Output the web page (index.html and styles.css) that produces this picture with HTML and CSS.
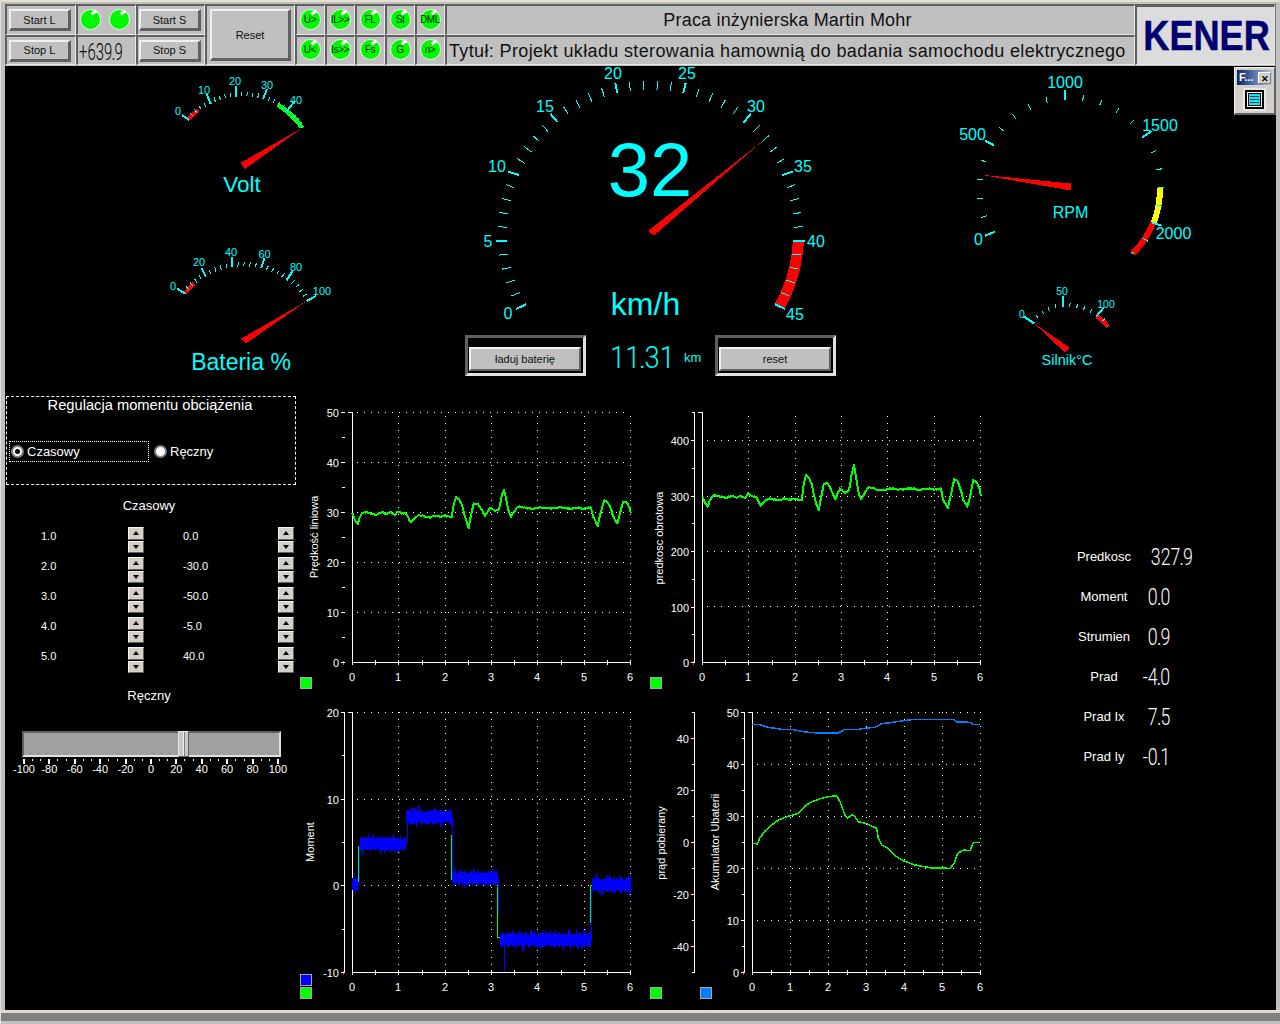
FILE: index.html
```html
<!DOCTYPE html>
<html lang="pl">
<head>
<meta charset="utf-8">
<title>Praca inżynierska Martin Mohr</title>
<link rel="stylesheet" href="styles.css">
</head>
<body>
<div class="window">
  <header class="toolbar">
    <div class="cell"><button class="btn">Start L</button></div>
    <div class="cell cell-leds"><span class="led"></span><span class="led"></span></div>
    <div class="cell"><button class="btn">Start S</button></div>
    <div class="cell cell-reset"><button class="btn btn-reset">Reset</button></div>
    <div class="cell"><span class="led">U&gt;</span></div>
    <div class="cell"><span class="led">IL&gt;&gt;</span></div>
    <div class="cell"><span class="led">FL</span></div>
    <div class="cell"><span class="led">St</span></div>
    <div class="cell"><span class="led">DML</span></div>
    <div class="cell cell-title">Praca inżynierska Martin Mohr</div>
    <div class="cell cell-logo"><span class="logo">KENER</span></div>
    <div class="cell"><button class="btn">Stop L</button></div>
    <div class="cell cell-num"><span class="seg seg-dark">+639<span class="dot">.</span>9</span></div>
    <div class="cell"><button class="btn">Stop S</button></div>
    <div class="cell"><span class="led">U&lt;</span></div>
    <div class="cell"><span class="led">Is&gt;&gt;</span></div>
    <div class="cell"><span class="led">Fs</span></div>
    <div class="cell"><span class="led">G</span></div>
    <div class="cell"><span class="led">n&gt;</span></div>
    <div class="cell cell-subtitle">Tytuł: Projekt układu sterowania hamownią do badania samochodu elektrycznego</div>
  </header>

  <main class="panel">
    <svg class="canvas" id="canvas" width="1270" height="944" viewBox="5 66 1270 944" aria-label="Instrumenty"></svg>

    <aside class="controls">
      <section class="mode-box">
        <h2 class="mode-title">Regulacja momentu obciążenia</h2>
        <div class="mode-row">
          <label class="radio radio-focus"><span class="radio-dot radio-on"></span>Czasowy</label>
          <label class="radio"><span class="radio-dot"></span>Ręczny</label>
        </div>
      </section>
      <h3 class="heading heading-time">Czasowy</h3>
      <div class="timing">
        <span>1.0</span><span class="spin"><i class="up"></i><i class="down"></i></span><span class="t-val">0.0</span><span class="spin"><i class="up"></i><i class="down"></i></span>
        <span>2.0</span><span class="spin"><i class="up"></i><i class="down"></i></span><span class="t-val">-30.0</span><span class="spin"><i class="up"></i><i class="down"></i></span>
        <span>3.0</span><span class="spin"><i class="up"></i><i class="down"></i></span><span class="t-val">-50.0</span><span class="spin"><i class="up"></i><i class="down"></i></span>
        <span>4.0</span><span class="spin"><i class="up"></i><i class="down"></i></span><span class="t-val">-5.0</span><span class="spin"><i class="up"></i><i class="down"></i></span>
        <span>5.0</span><span class="spin"><i class="up"></i><i class="down"></i></span><span class="t-val">40.0</span><span class="spin"><i class="up"></i><i class="down"></i></span>
      </div>
      <h3 class="heading heading-manual">Ręczny</h3>
      <div class="slider"><span class="thumb"></span></div>
      <div class="scale">
        <span>-100</span><span>-80</span><span>-60</span><span>-40</span><span>-20</span><span>0</span><span>20</span><span>40</span><span>60</span><span>80</span><span>100</span>
      </div>
    </aside>

    <section class="center">
      <div class="frame"><button class="btn btn-frame">ładuj baterię</button></div>
      <div class="odo">
        <span class="seg seg-cyan">11<span class="dot">.</span>31</span>
        <span class="km">km</span>
      </div>
      <div class="frame"><button class="btn btn-frame">reset</button></div>
    </section>

    <section class="readouts">
      <span class="r-label">Predkosc</span><span class="seg r-val r-wide">327<span class="dot">.</span>9</span>
      <span class="r-label">Moment</span><span class="seg r-val">0<span class="dot">.</span>0</span>
      <span class="r-label">Strumien</span><span class="seg r-val">0<span class="dot">.</span>9</span>
      <span class="r-label">Prad</span><span class="seg r-val">-4<span class="dot">.</span>0</span>
      <span class="r-label">Prad Ix</span><span class="seg r-val">7<span class="dot">.</span>5</span>
      <span class="r-label">Prad Iy</span><span class="seg r-val">-0<span class="dot">.</span>1</span>
    </section>

    <div class="palette">
      <div class="palette-title"><span>F...</span><b class="palette-x">✕</b></div>
      <div class="palette-tool">
        <svg width="23" height="23" viewBox="0 0 23 23" class="palette-icon">
          <rect x="0" y="0" width="23" height="23" fill="#e8e8e8"/>
          <rect x="2" y="2" width="19" height="19" fill="#000"/>
          <rect x="4" y="4" width="15" height="15" fill="#fff"/>
          <rect x="5" y="5" width="13" height="13" fill="#000"/>
          <rect x="6" y="6" width="11" height="11" fill="#22e0f0"/>
          <path d="M7 8.5h9M7 11.5h9M7 14.5h9" stroke="#004060" stroke-width="1"/>
        </svg>
      </div>
    </div>
  </main>
  <footer class="statusbar"></footer>
</div>
<script src="app.js"></script>
</body>
</html>
```
FILE: styles.css
```css
* { box-sizing: border-box; }
html, body { margin: 0; padding: 0; background: #c0c0c0; }
body { font-family: "Liberation Sans", Arial, sans-serif; }

.window {
  width: 1280px;
  height: 1024px;
  background: #c0c0c0;
  border-top: 2px solid #e4e0d4;
  border-left: 1px solid #e4e0d4;
  padding: 2px 4px 0 4px;
  display: flex;
  flex-direction: column;
  overflow: hidden;
}

/* ---------- toolbar ---------- */
.toolbar {
  display: grid;
  grid-template-columns: 71px 60px 69px 90px repeat(5, 30px) 690px 140px;
  grid-template-rows: 31px 30px;
  height: 61px;
  flex: none;
  background: #6e6e6e;
}
.cell {
  background: #c0c0c0;
  border-top: 2px solid #606060;
  border-left: 2px solid #606060;
  border-right: 1px solid #e8e8e8;
  border-bottom: 1px solid #e8e8e8;
  display: flex;
  align-items: center;
  justify-content: center;
}
.cell-leds { gap: 9px; padding-right: 3px; }
.cell-reset { grid-row: span 2; padding-left: 2px; }
.cell-title { color: #111; font-size: 18px; letter-spacing: 0.01em; padding-right: 6px; }
.cell-subtitle { color: #111; font-size: 18px; justify-content: flex-start; padding: 2px 0 0 2px; white-space: nowrap; letter-spacing: 0.36px; }
.cell-logo { background: #dcdcdc; grid-column: 11; grid-row: 1 / 3; border-top-width: 3px; overflow: hidden; padding-left: 2px; }
.cell-num { justify-content: flex-start; padding-left: 1px; }

.btn {
  font-family: "Liberation Sans", Arial, sans-serif;
  font-size: 11px;
  color: #111;
  background: #c0c0c0;
  width: 62px;
  height: 22px;
  margin-left: -2px;
  padding: 0;
  border-style: solid;
  border-width: 2px 3px 3px 2px;
  border-color: #f0f0f0 #606060 #606060 #f0f0f0;
  border-radius: 0;
}
.btn-reset { width: 81px; height: 52px; }
.btn-frame { width: 112px; height: 24px; margin-left: 0; border-width: 2px; font-size: 11px; }

.logo {
  font-family: "Liberation Sans", sans-serif;
  font-weight: 700;
  font-size: 42px;
  line-height: 1;
  color: #000070;
  -webkit-text-stroke: 0.5px #000070;
  transform: scaleX(0.86);
  display: inline-block;
  margin-top: 1px;
}

.led {
  width: 21px;
  height: 21px;
  margin: -2px 0 0 -1px;
  border-radius: 50%;
  background: #00f800;
  border: 1px solid #e4ffe4;
  position: relative;
  color: #0a2a0a;
  font-size: 10px;
  letter-spacing: -0.4px;
  display: flex;
  align-items: center;
  justify-content: center;
  white-space: nowrap;
}
.led::before {
  content: "";
  position: absolute;
  top: 1px;
  left: 10px;
  width: 6px;
  height: 3px;
  background: #fff;
  transform: rotate(-35deg);
}

/* ---------- seven segment readouts ---------- */
.seg {
  font-family: "Roboto", "Lato", "Liberation Sans", sans-serif;
  font-weight: 300;
  white-space: nowrap;
  line-height: 1;
  display: inline-block;
}
.seg .dot { font-weight: 900; font-size: 0.5em; }
.seg-dark {
  color: #000;
  font-size: 24px;
  transform: scaleX(0.62);
  transform-origin: left center;
  margin-top: 3px;
}

/* ---------- main panel ---------- */
.panel {
  position: relative;
  flex: 1;
  margin-top: 1px;
  background: #000;
  color: #fff;
  display: grid;
  grid-template-columns: 292px 762px 216px;
  align-items: start;
}
.canvas {
  position: absolute;
  top: 0;
  left: 0;
  pointer-events: none;
  shape-rendering: crispEdges;
  font-family: "Liberation Sans", Arial, sans-serif;
}

/* ---------- controls column ---------- */
.controls { padding-top: 330px; font-size: 13px; }
.mode-box {
  margin-left: 1px;
  width: 290px;
  height: 89px;
  border: 1px dashed #fff;
}
.mode-title {
  margin: 0;
  font-size: 14.7px;
  font-weight: 400;
  text-align: center;
  line-height: 16px;
  padding-right: 2px;
}
.mode-row { display: flex; margin-top: 28px; padding-left: 2px; }
.radio { display: flex; align-items: center; gap: 3px; font-size: 13px; height: 21px; }
.radio-focus { width: 140px; border: 1px dotted #fff; margin-right: 5px; padding-left: 1px; }
.radio-dot {
  width: 13px;
  height: 13px;
  border-radius: 50%;
  background: #fff;
  border: 2px solid #808080;
  display: inline-block;
  position: relative;
}
.radio-on::after {
  content: "";
  position: absolute;
  left: 2px;
  top: 2px;
  width: 5px;
  height: 5px;
  border-radius: 50%;
  background: #000;
}
.heading { margin: 0; font-size: 13px; font-weight: 400; line-height: 16px; text-align: center; width: 288px; }
.heading-time { margin-top: 13px; }
.heading-manual { margin-top: 12px; }
.timing {
  display: grid;
  margin-top: 12px;
  padding-left: 36px;
  grid-template-columns: 87px 16px 134px 16px;
  grid-auto-rows: 30px;
  font-size: 11px;
  line-height: 20px;
}
.t-val { padding-left: 39px; }
.spin { display: flex; flex-direction: column; gap: 1px; padding-top: 1px; }
.spin i {
  display: flex;
  align-items: center;
  justify-content: center;
  width: 16px;
  height: 12.5px;
  background: #d4d0c8;
  border-style: solid;
  border-width: 1px;
  border-color: #f4f4f4 #606060 #606060 #f4f4f4;
}
.spin i::before { content: ""; border-left: 3.5px solid transparent; border-right: 3.5px solid transparent; }
.spin .up::before { border-bottom: 4px solid #000; }
.spin .down::before { border-top: 4px solid #000; }

.slider {
  position: relative;
  margin: 27px 0 0 17px;
  width: 259px;
  height: 26px;
  background: #a0a0a0;
  border-style: solid;
  border-width: 2px;
  border-color: #606060 #e0e0e0 #e0e0e0 #606060;
}
.thumb {
  position: absolute;
  left: 154px;
  top: -2px;
  width: 11px;
  height: 26px;
  background: linear-gradient(90deg, #c8c8c8 0 4px, #f0f0f0 4px 5px, #808080 5px 6px, #c8c8c8 6px);
  border: 1px solid #e8e8e8;
  border-right-color: #606060;
  border-bottom-color: #606060;
}
.scale {
  display: grid;
  grid-template-columns: repeat(11, 25.4px);
  margin: 5px 0 0 6.3px;
  font-size: 11px;
  line-height: 14px;
  text-align: center;
  white-space: nowrap;
}

/* ---------- centre row ---------- */
.center {
  margin: 269px 0 0 168px;
  display: flex;
  align-items: flex-start;
}
.frame {
  width: 121px;
  height: 41px;
  background: #000;
  border-style: solid;
  border-width: 3px;
  border-color: #606060 #e0e0e0 #e0e0e0 #606060;
  padding: 9px 0 0 1px;
}
.odo {
  width: 129px;
  height: 41px;
  display: flex;
  align-items: center;
  padding-left: 24px;
  padding-top: 3px;
  color: #00ffff;
}
.seg-cyan { font-size: 31px; transform: scaleX(0.88); transform-origin: left center; width: 74px; }
.km { font-size: 13px; }

/* ---------- right readouts ---------- */
.readouts {
  margin-top: 471px;
  display: grid;
  grid-template-columns: 90px 44px;
  grid-auto-rows: 40px;
  align-items: center;
}
.r-label { font-size: 13px; text-align: center; line-height: 40px; }
.r-val {
  font-size: 24px;
  justify-self: end;
  margin-right: 23px;
  transform: scaleX(0.74);
  transform-origin: right center;
}
.r-wide { margin-right: 0; }

/* ---------- floating palette ---------- */
.palette {
  position: absolute;
  top: 1px;
  right: 0;
  width: 42px;
  height: 48px;
  background: #d4d0c8;
  border-style: solid;
  border-width: 1px 2px 2px 1px;
  border-color: #f4f4f4 #606060 #606060 #f4f4f4;
  padding: 2px;
  color: #000;
}
.palette-title {
  height: 15px;
  background: linear-gradient(90deg, #0a246a, #a6caf0);
  color: #fff;
  font-size: 11px;
  font-weight: 700;
  display: flex;
  justify-content: space-between;
  align-items: center;
  padding: 0 1px 0 2px;
  line-height: 1;
}
.palette-x {
  width: 13px;
  height: 12px;
  background: #d4d0c8;
  color: #000;
  font-size: 9px;
  font-weight: 700;
  text-align: center;
  line-height: 12px;
  border: 1px solid #808080;
  border-top-color: #fff;
  border-left-color: #fff;
}
.palette-tool { display: flex; justify-content: center; padding-top: 3px; }

/* ---------- status bar ---------- */
.statusbar {
  flex: none;
  height: 14px;
  margin: 0 -4px 0 -5px;
  background: #808080;
  border-top: 3px solid #dedad0;
  border-bottom: 3px solid #c0c0c0;
}
```
FILE: app.js
```js
(function () {
  var NS = 'http://www.w3.org/2000/svg';
  var svg = document.getElementById('canvas');
  var CYAN = '#00ffff', RED = '#ff0000', GREEN = '#00ff00', BLUE = '#0000ff', SKY = '#0080ff', WHITE = '#ffffff';

  function el(tag, attrs, text) {
    var n = document.createElementNS(NS, tag);
    for (var k in attrs) n.setAttribute(k, attrs[k]);
    if (text !== undefined) n.textContent = text;
    svg.appendChild(n);
    return n;
  }
  function line(x1, y1, x2, y2, color, w, dash) {
    var a = { x1: x1, y1: y1, x2: x2, y2: y2, stroke: color, 'stroke-width': w || 1 };
    if (dash) a['stroke-dasharray'] = dash;
    return el('line', a);
  }
  function text(x, y, s, size, color, anchor) {
    return el('text', { x: x, y: y, fill: color, 'font-size': size, 'text-anchor': anchor || 'middle', 'dominant-baseline': 'central' }, s);
  }
  function poly(points, color) { return el('polygon', { points: points.map(function (p) { return p.join(','); }).join(' '), fill: color }); }
  function pathLine(points, color, w) {
    return el('polyline', { points: points.map(function (p) { return p[0].toFixed(1) + ',' + p[1].toFixed(1); }).join(' '), fill: 'none', stroke: color, 'stroke-width': w, 'stroke-linejoin': 'round' });
  }
  var seed = 12345;
  function rnd() { seed = (seed * 1664525 + 1013904223) >>> 0; return seed / 4294967296; }

  /* ---------- gauges ---------- */
  function gauge(g) {
    var cx = g.c[0], cy = g.c[1];
    var polar = g.majors.map(function (m) {
      var dx = m[0] - cx, dy = m[1] - cy;
      return { a: Math.atan2(dx, -dy), r: Math.sqrt(dx * dx + dy * dy) };
    });
    function at(t, off) {
      var i = Math.min(Math.floor(t), polar.length - 2), f = t - i;
      var a = polar[i].a + (polar[i + 1].a - polar[i].a) * f;
      var r = polar[i].r + (polar[i + 1].r - polar[i].r) * f + off;
      return [cx + r * Math.sin(a), cy - r * Math.cos(a)];
    }
    (g.bands || []).forEach(function (b) {
      var pts = [];
      for (var t = b[0]; t <= b[1] + 0.001; t += 0.05) pts.push(at(t, b[2]));
      el('polyline', { points: pts.map(function (p) { return p.join(','); }).join(' '), fill: 'none', stroke: b[4], 'stroke-width': b[3] });
    });
    g.majors.forEach(function (m, i) {
      if (i < g.majors.length - 1) {
        var sub = (i === g.majors.length - 2 && g.lastSub) ? g.lastSub : 5;
        for (var k = 1; k < sub; k++) {
          var p = at(i + k / sub, 0), q = at(i + k / sub, g.minorLen);
          line(p[0], p[1], q[0], q[1], CYAN, g.minorW);
        }
      }
      line(m[0], m[1], m[2], m[3], CYAN, m[7] || g.majorW);
      if (m[4] !== '') text(m[5], m[6], m[4], g.font, CYAN);
    });
    poly(g.needle, RED);
  }

  gauge({
    c: [650.5, 240], minorLen: 9, minorW: 1, majorW: 2, font: 16,
    majors: [
      [526, 304.3, 516, 309, '0', 508, 313],
      [507, 240.7, 496, 240.7, '5', 488, 241],
      [519, 175, 508.3, 171.7, '10', 497, 166],
      [557.7, 122.3, 550.7, 114, '15', 545, 106],
      [617.3, 93.3, 615.3, 82.7, '20', 613, 73],
      [683.3, 93.3, 685.7, 82.7, '25', 687, 73],
      [743.7, 122.7, 751, 113.3, '30', 756, 106],
      [782.3, 175, 792.7, 171.7, '35', 803, 166],
      [793.3, 240.7, 805, 240.7, '40', 816, 241],
      [775, 304.3, 785, 309, '45', 795, 314]
    ],
    bands: [[8, 9, 5, 11, RED]],
    needle: [[648, 231], [654, 235.5], [762, 141.5]]
  });
  text(650, 169, '32', 76, CYAN);
  text(645.5, 304, 'km/h', 32, CYAN);

  gauge({
    c: [236, 167], minorLen: 4.5, minorW: 1, majorW: 2, font: 11,
    majors: [
      [189, 120, 182, 115, '0', 178, 111],
      [210.7, 104, 206.7, 94, '10', 204, 90],
      [236, 96.7, 236, 85.7, '20', 235, 81],
      [263, 99, 267, 89, '30', 267, 85],
      [286, 112, 294, 102, '40', 296, 100],
      [301, 128, 304, 126.5, '', 0, 0, 1]
    ],
    bands: [[0, 0.5, 1, 4, RED], [3.6, 5, 1, 4.5, GREEN]],
    needle: [[240.5, 163], [245, 169], [302, 128]]
  });
  text(242, 184, 'Volt', 22.5, CYAN);

  gauge({
    c: [232, 340], minorLen: 4.5, minorW: 1, majorW: 2, font: 11,
    majors: [
      [185.7, 294, 176.7, 288.3, '0', 173, 286],
      [206, 276.7, 201.7, 268.3, '20', 199, 262],
      [232.3, 267.3, 232.3, 257.3, '40', 231, 252],
      [261, 268.3, 264.3, 258.3, '60', 264.5, 254],
      [286.7, 280, 292.7, 271, '80', 296, 267],
      [306.7, 301, 316, 296, '100', 322, 291]
    ],
    bands: [[0, 0.5, 1, 4, RED]],
    needle: [[241.5, 338.5], [246, 343.5], [306.7, 301]]
  });
  text(241, 362, 'Bateria %', 23, CYAN);

  gauge({
    c: [1065, 190], minorLen: 6, minorW: 1, majorW: 2, font: 16, lastSub: 2,
    majors: [
      [995, 231.7, 985, 235.7, '0', 978.5, 239],
      [994, 145.3, 985, 140.7, '500', 972.5, 134],
      [1065, 100, 1065, 90, '1000', 1065, 82.5],
      [1142.3, 137.3, 1151.7, 131, '1500', 1160, 125],
      [1151.7, 222.3, 1161.7, 225.7, '2000', 1173.5, 233],
      [1131.7, 252.3, 1133.5, 254, '', 0, 0, 1]
    ],
    bands: [[3.6, 4, 2, 6, '#ffff00'], [4, 5, 1.5, 6, RED]],
    needle: [[979, 174.5], [1071, 183.5], [1071, 190.5]]
  });
  text(1070.5, 212, 'RPM', 16, CYAN);

  gauge({
    c: [1063, 355], minorLen: 4, minorW: 1, majorW: 2, font: 10.5, lastSub: 2,
    majors: [
      [1034, 323.3, 1024, 316.7, '0', 1022, 314],
      [1062.7, 306.7, 1062.7, 295.7, '50', 1062, 291],
      [1096, 316.7, 1104, 307.3, '100', 1106, 304],
      [1107, 327, 1108, 326, '', 0, 0, 1]
    ],
    bands: [[2, 3, 1, 4.5, RED]],
    needle: [[1065, 352.5], [1070, 348], [1034, 323.3]]
  });
  text(1067, 359.5, 'Silnik°C', 14.5, CYAN);

  /* ---------- slider scale ticks ---------- */
  for (var st = 0; st <= 30; st++) {
    var sx = 24 + st * 254 / 30;
    if (st % 3 === 0) line(sx, 759, sx, 764, WHITE, 2); else line(sx, 759, sx, 761, WHITE, 1);
  }

  /* ---------- charts ---------- */
  function chart(c) {
    var X0 = c.x0, X1 = c.x1, Y0 = c.y0, Y1 = c.y1;
    c.gridX.forEach(function (x) { line(x + .5, Y1, x + .5, Y0, WHITE, 1, '1 6'); });
    c.gridY.forEach(function (y) { line(X0 + 5, y + .5, X1, y + .5, WHITE, 1, '1 6'); });
    line(X0 + .5, Y0, X0 + .5, Y1 + 1, WHITE, 1);
    line(X0, Y1 + .5, X1 + 1, Y1 + .5, WHITE, 1);
    line(X0 - 4, Y0 + .5, X0 + 1, Y0 + .5, WHITE, 1);
    var labels = c.xLabels;
    for (var i = 0; i < labels.length; i++) {
      text(labels[i], Y1 + 15, String(i), 11, WHITE);
      line(labels[i] + .5, Y1 - 2, labels[i] + .5, Y1 + 3, WHITE, 1);
      if (i < labels.length - 1) {
        var m = Math.round((labels[i] + labels[i + 1]) / 2);
        line(m + .5, Y1 - 2, m + .5, Y1 + 3, WHITE, 1);
      }
    }
    line(X0 - 9, Y1 - 1, X0 - 9, Y1 + 3, '#c06000', 1);
    c.axes.forEach(function (a) {
      if (a.line) {
        line(a.x + .5, Y0, a.x + .5, Y1 + 1, WHITE, 1);
      }
      a.ticks.forEach(function (t) {
        if (t[1] !== null) {
          line(a.x - 3, t[0] + .5, a.x + 1, t[0] + .5, WHITE, 1);
          text(a.x - 5, t[0] + .5, t[1], 11, WHITE, 'end');
        } else {
          line(a.x - 2, t[0] + .5, a.x + 1, t[0] + .5, WHITE, 1);
        }
      });
    });
    if (c.title) c.title.forEach(function (t) {
      el('text', { x: 0, y: 0, fill: WHITE, 'font-size': 11, 'text-anchor': 'middle', 'dominant-baseline': 'central', transform: 'translate(' + t[0] + ' ' + t[1] + ') rotate(-90)' }, t[2]);
    });
  }
  function ticksFrom(top, bottom, labels) {
    var out = [], n = labels.length - 1, step = (bottom - top) / n;
    labels.forEach(function (l, i) {
      out.push([Math.round(top + i * step), l]);
      if (i < n) out.push([Math.round(top + (i + .5) * step), null]);
    });
    return out;
  }
  function legend(x, y, color) {
    el('rect', { x: x + .5, y: y + .5, width: 11, height: 11, fill: color, stroke: '#a8a8a8', 'stroke-width': 1 });
  }
  function resample(pts, jitter) {
    var out = [];
    for (var i = 0; i < pts.length - 1; i++) {
      var a = pts[i], b = pts[i + 1], n = Math.max(1, Math.round(b[0] - a[0]));
      for (var k = 0; k < n; k++) {
        var f = k / n;
        out.push([a[0] + (b[0] - a[0]) * f, a[1] + (b[1] - a[1]) * f + (rnd() - .5) * jitter]);
      }
    }
    out.push(pts[pts.length - 1]);
    return out;
  }

  var speedZ = [[157,340],[165,360],[173,373],[180,350],[188,337],[200,337],[215,340],[228,345],[245,337],[258,343],[272,337],[285,345],[295,333],[305,340],[318,340],[332,367],[345,353],[357,345],[370,348],[390,352],[405,346],[420,350],[435,347],[455,352],[462,310],[468,292],[477,298],[485,313],[495,350],[506,383],[513,345],[521,312],[530,310],[540,320],[555,348],[570,323],[585,333],[597,328],[605,290],[612,268],[618,295],[625,330],[633,350],[645,332],[655,319],[680,325],[700,327],[720,323],[760,325],[780,322],[810,326],[835,322],[850,326],[872,323],[880,350],[893,377],[903,335],[913,300],[922,305],[932,325],[940,350],[952,372],[960,340],[970,303],[980,308],[990,325],[992,338]];

  chart({
    x0: 352, x1: 630, y0: 412, y1: 662,
    gridX: [398, 445, 491, 537, 584, 630],
    gridY: [412, 462, 512, 562, 612],
    xLabels: [352, 398, 445, 491, 537, 584, 630],
    axes: [{ x: 344, line: false, ticks: ticksFrom(412, 662, ['50', '40', '30', '20', '10', '0']) }],
    title: [[314, 537, 'Prędkość liniowa']]
  });
  pathLine(resample(speedZ.map(function (p) { return [p[0] / 3 + 300, p[1] / 3 + 400]; }), 1.2), GREEN, 2);
  legend(300, 677, GREEN);

  chart({
    x0: 702, x1: 980, y0: 412, y1: 662,
    gridX: [748, 795, 841, 887, 934, 980],
    gridY: [440, 496, 551, 606],
    xLabels: [702, 748, 795, 841, 887, 934, 980],
    axes: [{ x: 694, line: true, ticks: [[412, null]].concat(ticksFrom(440, 662, ['400', '300', '200', '100', '0'])) }],
    title: [[659, 538, 'predkosc obrotowa']]
  });
  pathLine(resample(speedZ.map(function (p) {
    var d = p[1] - 337, y = 287 + (d < 0 ? d * 1.3 - 3 : d * 0.95);
    return [(p[0] + 15) / 3 + 645, y / 3 + 400];
  }), 1.2), GREEN, 2);
  legend(650, 677, GREEN);

  chart({
    x0: 352, x1: 630, y0: 712, y1: 972,
    gridX: [398, 445, 491, 537, 584, 630],
    gridY: [712, 799, 885],
    xLabels: [352, 398, 445, 491, 537, 584, 630],
    axes: [{ x: 344, line: true, ticks: ticksFrom(712, 972, ['20', '10', '0', '-10']) }],
    title: [[310, 842, 'Moment']]
  });
  [[190, 438, 545, 190, 438, 194], [470, 405, 540, 470, 540, 474], [607, 560, 712, 607, 712, 614], [887, 555, 670, 887, 556, 890]].forEach(function (s) {
    line(s[0] / 3 + 295, s[1] / 3 + 700, s[0] / 3 + 295, s[2] / 3 + 700, GREEN, 1);
    line(s[3] / 3 + 295, s[4] / 3 + 700, s[5] / 3 + 295, s[4] / 3 + 700, GREEN, 1);
  });
  var segs = [[352, 358, 885], [360, 406, 844], [406, 452, 817], [452, 498, 878], [500, 591, 940], [592, 631, 885]];
  var d = '';
  segs.forEach(function (s) {
    for (var x = s[0]; x < s[1]; x++) {
      var up = 4.5 + rnd() * 3, dn = 4.5 + rnd() * 3;
      if (rnd() < .25) up += rnd() * 5;
      if (rnd() < .25) dn += rnd() * 5;
      d += 'M' + (x + .5) + ' ' + (s[2] - up).toFixed(0) + 'V' + (s[2] + dn).toFixed(0);
    }
  });
  d += 'M504.5 940V972M452.5 817V880M498.5 878V915M591.5 940V890M407.5 844V817M359.5 885V845M354.5 885V873';
  el('path', { d: d, stroke: BLUE, 'stroke-width': 1, fill: 'none' });
  legend(300, 974, BLUE);
  legend(300, 987, GREEN);

  chart({
    x0: 752, x1: 980, y0: 712, y1: 972,
    gridX: [790, 828, 866, 904, 942, 980],
    gridY: [712, 764, 816, 868, 920],
    xLabels: [752, 790, 828, 866, 904, 942, 980],
    axes: [
      { x: 744, line: true, ticks: ticksFrom(712, 972, ['50', '40', '30', '20', '10', '0']) },
      { x: 694, line: true, ticks: [[712, null], [738, '40'], [764, null], [790, '20'], [816, null], [842, '0'], [868, null], [894, '-20'], [920, null], [946, '-40'], [972, null]] }
    ],
    title: [[661, 843, 'prąd pobierany'], [715, 842, 'Akumulator Ubaterii']]
  });
  var conv = function (p) { return [p[0] / 3 + 645, p[1] / 3 + 700]; };
  pathLine([[322,73],[340,73],[370,82],[410,88],[440,88],[480,96],[520,99],[580,99],[600,88],[640,88],[660,85],[690,82],[710,71],[735,68],[775,62],[810,58],[925,58],[935,66],[975,67],[985,73],[1006,73]].map(conv), SKY, 1.5);
  pathLine([[322,430],[337,432],[345,413],[360,393],[380,375],[400,360],[430,349],[460,340],[480,318],[500,305],[530,295],[550,290],[575,287],[585,305],[600,345],[608,354],[620,345],[628,347],[640,365],[665,371],[695,385],[700,415],[710,435],[730,445],[750,467],[775,482],[810,495],[860,504],[915,505],[928,490],[938,460],[955,450],[975,452],[985,428],[1006,428]].map(conv), GREEN, 1.5);
  legend(650, 987, GREEN);
  legend(700, 987, SKY);
})();
```
